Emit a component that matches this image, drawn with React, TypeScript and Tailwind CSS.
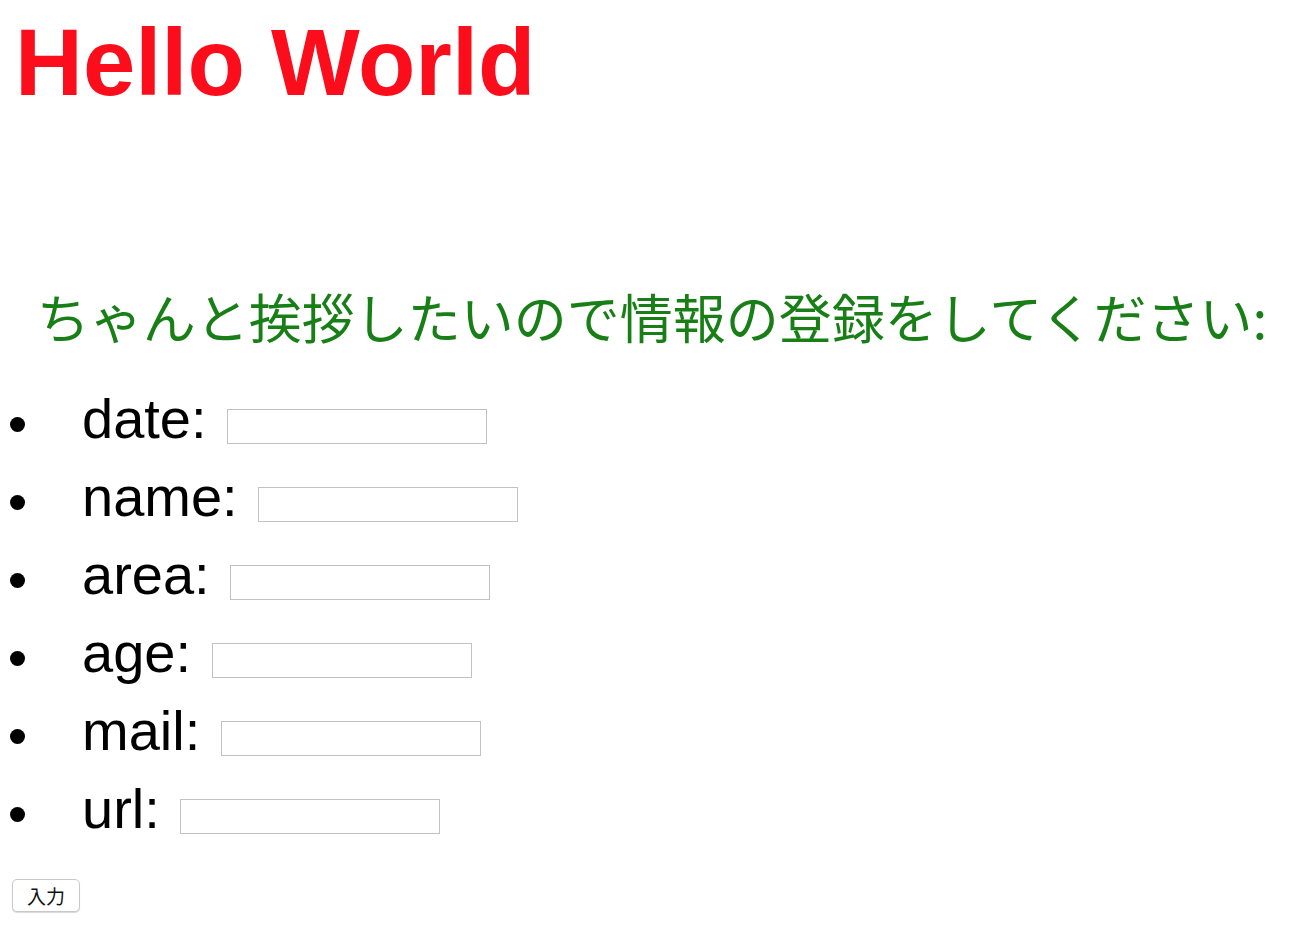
import React from "react";

const fields = ["date", "name", "area", "age", "mail", "url"];

export default function App() {
  return (
    <div className="min-h-[950px] w-[1304px] bg-white text-black font-['Liberation_Sans','Noto_Sans_CJK_JP',sans-serif]">
      <h1 className="pl-[15px] pt-[8px] text-[94px] leading-[110px] font-bold text-[#fb0d1b]">
        Hello World
      </h1>
      <h2 className="mt-[168px] text-center text-[53px] leading-[60px] font-normal text-[#177f15] font-['Noto_Sans_CJK_JP',sans-serif]">
        ちゃんと挨拶したいので情報の登録をしてください:
      </h2>
      <ul className="mt-[42px]">
        {fields.map((f) => (
          <li key={f} className="flex items-start h-[78px]">
            <span className="mt-[29px] ml-[10px] w-[15px] h-[15px] rounded-full bg-black shrink-0" />
            <span className="ml-[57px] text-[56px] leading-[62px] whitespace-pre">{f}: </span>
            <input
              type="text"
              className="mt-[21px] ml-[5px] w-[260px] h-[35px] border border-[#c2c2c2] bg-white outline-none"
            />
          </li>
        ))}
      </ul>
      <button
        type="button"
        className="mt-[23px] ml-[12px] w-[68px] h-[33px] rounded-[5px] border border-[#c9c9c9] bg-white text-[19px] leading-[20px] text-[#111] shadow-[0_1px_1px_rgba(0,0,0,0.15)] font-['Noto_Sans_CJK_JP',sans-serif]"
      >
        入力
      </button>
    </div>
  );
}
